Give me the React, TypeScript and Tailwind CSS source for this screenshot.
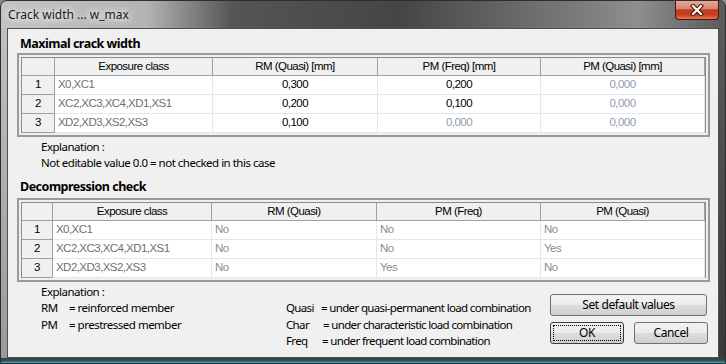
import React from "react";

const tbl = "font-['Liberation_Sans',Arial,sans-serif] text-[11.5px] tracking-[-0.55px]";
const ui = "font-['Noto_Sans','Open_Sans',sans-serif]";
const uiText = "font-['Noto_Sans','Open_Sans',sans-serif] text-[11.5px] tracking-[-0.5px]";

type Tone = "k" | "g" | "l" | "n";
type Row = { n: string; cells: [string, Tone][] };

function toneCls(t: Tone) {
  if (t === "k") return "text-black";
  if (t === "g") return "text-[#6f6f6f]";
  if (t === "n") return "text-[#8c8c8c]";
  return "text-[#8f9cab]";
}

function Grid({
  cols,
  headers,
  rows,
  center,
}: {
  cols: string;
  headers: string[];
  rows: Row[];
  center: boolean;
}) {
  return (
    <div className="w-[693px] border-2 border-[#9a9a9a] p-[2px] bg-[#f0f0f0]">
      <div className={`grid ${cols} border-l border-t border-r border-[#8a8a8a] bg-white ${tbl}`}>
        {headers.map((h, i) => (
          <div
            key={"h" + i}
            className="h-[18px] bg-[#f0f0f0] border-r border-b border-[#a0a0a0] flex items-center justify-center text-black whitespace-nowrap"
          >
            {h}
          </div>
        ))}
        {rows.map((r, ri) => (
          <React.Fragment key={"r" + ri}>
            <div className="h-[19px] bg-[#f0f0f0] border-r border-b border-[#a0a0a0] flex items-center justify-center text-black">
              {r.n}
            </div>
            {r.cells.map(([t, tone], ci) => (
              <div
                key={ci}
                className={`h-[19px] bg-white border-r border-b border-[#e6e6e6] flex items-center whitespace-nowrap ${
                  ci === 0 || !center ? "justify-start pl-[3px]" : "justify-center"
                } ${toneCls(tone)}`}
              >
                {t}
              </div>
            ))}
          </React.Fragment>
        ))}
      </div>
    </div>
  );
}

function Btn({ label, w, focus }: { label: string; w: string; focus?: boolean }) {
  return (
    <button
      className={`${w} h-[22px] rounded-[3px] border ${
        focus ? "border-[#3c3c3c]" : "border-[#707070]"
      } bg-[linear-gradient(to_bottom,#f2f2f2_0%,#ebebeb_50%,#dddddd_51%,#cfcfcf_100%)] p-[2px] flex`}
    >
      <span
        className={`flex-1 flex items-center justify-center text-black whitespace-nowrap font-['Noto_Sans','Open_Sans',sans-serif] text-[12px] tracking-[-0.4px] ${
          focus ? "border border-dotted border-black" : "border border-transparent"
        }`}
      >
        {label}
      </span>
    </button>
  );
}

export default function App() {
  const rows1: Row[] = [
    { n: "1", cells: [["X0,XC1", "g"], ["0,300", "k"], ["0,200", "k"], ["0,000", "l"]] },
    { n: "2", cells: [["XC2,XC3,XC4,XD1,XS1", "g"], ["0,200", "k"], ["0,100", "k"], ["0,000", "l"]] },
    { n: "3", cells: [["XD2,XD3,XS2,XS3", "g"], ["0,100", "k"], ["0,000", "l"], ["0,000", "l"]] },
  ];
  const rows2: Row[] = [
    { n: "1", cells: [["X0,XC1", "g"], ["No", "n"], ["No", "n"], ["No", "n"]] },
    { n: "2", cells: [["XC2,XC3,XC4,XD1,XS1", "g"], ["No", "n"], ["No", "n"], ["Yes", "n"]] },
    { n: "3", cells: [["XD2,XD3,XS2,XS3", "g"], ["No", "n"], ["Yes", "n"], ["No", "n"]] },
  ];

  return (
    <div className="w-[726px] h-[364px] bg-[#8a8a8a]">
      <div className="relative w-[726px] h-[364px] rounded-t-[7px] overflow-hidden border border-[#2e2e2e] bg-[linear-gradient(to_right,#c4c4c4_0%,#b4b4b4_20%,#555555_32%,#454545_55%,#6a6a6a_72%,#8e8e8e_88%,#5a5a5a_100%)] flex flex-col">
        {/* title bar */}
        <div className="h-[27px] shrink-0 flex items-center pl-[7px]">
          <span className={`${ui} text-[12px] text-[#1a1a1a] [text-shadow:0_0_6px_#ffffff,0_0_10px_#ffffff]`}>
            Crack width ... w_max
          </span>
        </div>
        <div className="absolute top-[-1px] right-[6px] w-[44px] h-[20px] rounded-b-[4px] border border-t-0 border-[#4a150c] bg-[linear-gradient(to_bottom,#e9ab9c_0%,#d98672_45%,#c23a20_52%,#c5401f_78%,#e3795a_100%)] flex items-center justify-center">
          <svg width="14" height="12" viewBox="0 0 14 12">
            <path d="M3 2 L11 10 M11 2 L3 10" stroke="#3b1209" strokeWidth="4.2" strokeLinecap="square" />
            <path d="M3 2 L11 10 M11 2 L3 10" stroke="#ffffff" strokeWidth="2.2" strokeLinecap="square" />
          </svg>
        </div>

        {/* body */}
        <div className="flex flex-1 min-h-0">
          <div className="w-[6px] shrink-0 bg-[linear-gradient(to_bottom,#c0c0c0,#9a9a9a)]" />
          <div className="w-[712px] shrink-0 h-[330px] border border-[#4f4f4f] bg-[#f0f0f0] px-[9px] flex flex-col">
            <div className={`mt-[7px] h-[16px] pl-[3px] flex items-center ${ui} font-bold text-[12.5px] tracking-[-0.5px] text-black`}>
              Maximal crack width
            </div>
            <div className="mt-[1px]">
              <Grid
                cols="grid-cols-[33px_158px_165px_163px_164px]"
                headers={["", "Exposure class", "RM (Quasi) [mm]", "PM (Freq) [mm]", "PM (Quasi) [mm]"]}
                rows={rows1}
                center={true}
              />
            </div>
            <div className={`mt-[2px] pl-[24px] ${uiText} leading-[16px] text-black`}>
              <div>Explanation :</div>
              <div>Not editable value 0.0 = not checked in this case</div>
            </div>
            <div className={`mt-[8px] h-[16px] pl-[3px] flex items-center ${ui} font-bold text-[12.5px] tracking-[-0.5px] text-black`}>
              Decompression check
            </div>
            <div className="mt-[3px]">
              <Grid
                cols="grid-cols-[31px_159px_165px_164px_164px]"
                headers={["", "Exposure class", "RM (Quasi)", "PM (Freq)", "PM (Quasi)"]}
                rows={rows2}
                center={false}
              />
            </div>
            <div className={`mt-[2px] flex ${uiText} leading-[16px] text-black whitespace-nowrap`}>
              <div className="w-[269px] pl-[24px]">
                <div>Explanation :</div>
                <div className="flex">
                  <span className="w-[28px]">RM</span>
                  <span>= reinforced member</span>
                </div>
                <div className="flex mt-[1px]">
                  <span className="w-[28px]">PM</span>
                  <span>= prestressed member</span>
                </div>
              </div>
              <div className="w-[264px] pt-[16px] tracking-[-0.65px]">
                <div className="flex">
                  <span className="w-[35px]">Quasi</span>
                  <span>= under quasi-permanent load combination</span>
                </div>
                <div className="flex mt-[1px]">
                  <span className="w-[37px]">Char</span>
                  <span>= under characteristic load combination</span>
                </div>
                <div className="flex">
                  <span className="w-[36px]">Freq</span>
                  <span>= under frequent load combination</span>
                </div>
              </div>
              <div className="pt-[10px] flex flex-col">
                <Btn label="Set default values" w="w-[157px]" />
                <div className="mt-[6px] flex gap-[10px]">
                  <Btn label="OK" w="w-[74px]" focus />
                  <Btn label="Cancel" w="w-[74px]" />
                </div>
              </div>
            </div>
          </div>
          <div className="flex-1 bg-[linear-gradient(to_bottom,#5a5a5a,#3a3a3a)]" />
        </div>
        <div className="h-[5px] shrink-0 bg-[linear-gradient(to_bottom,#3a3a3a_0%,#2f5560_60%,#39b7d6_100%)]" />
      </div>
    </div>
  );
}
